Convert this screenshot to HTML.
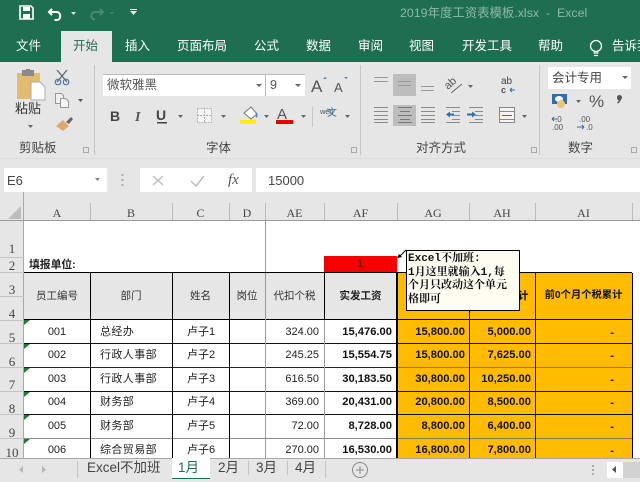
<!DOCTYPE html>
<html><head><meta charset="utf-8"><style>
html,body{margin:0;padding:0;background:#e6e6e6}
#r{position:relative;width:640px;height:482px;overflow:hidden;background:#e6e6e6;font-family:"Liberation Sans","Noto Sans CJK SC",sans-serif;color:#333}
.t,.b,.c{position:absolute;white-space:nowrap}
.t{line-height:1}
.b{display:block}
.tab{color:#fff;font-size:12.5px;top:39px;line-height:15px}
.gl{font-size:12.5px;color:#444;top:141px;line-height:15px}
.ch{position:absolute;top:192px;height:28px;text-align:center;font:12px/42px "Liberation Serif","Noto Serif CJK SC",serif;color:#444}
.rh{position:absolute;left:0;width:24px;text-align:center;font:13px "Liberation Serif",serif;color:#444}
.hc{font-size:10.5px;color:#333;line-height:16px;text-align:center;top:288px;position:absolute}
.num{position:absolute;text-align:right;font-size:11px;line-height:16px;color:#222}
.bd{font-weight:bold;color:#111;font-size:11.2px}
.nm{letter-spacing:.4px}
.sv{position:absolute;left:0;top:0}
</style></head><body><div id="r">

<!-- title bar -->
<div class="b" style="left:0;top:0;width:640px;height:62px;background:#1e6e51"></div>
<div class="b" style="left:61px;top:31px;width:51px;height:31px;background:#e6e6e6"></div>
<svg class="sv" width="640" height="62">
<path d="M20 6h11l2 2v11H20z" fill="none" stroke="#fff" stroke-width="1.6"/>
<rect x="23" y="7" width="7" height="4" fill="#fff"/><rect x="23" y="14" width="7" height="5" fill="#fff"/>
<path d="M52 9l-3 3 3 3M49.500 12h7c5 0 5 8 0 8h-2" fill="none" stroke="#fff" stroke-width="2"/>
<path d="M71 12h5l-2.500 3z" fill="#d5e3dc"/>
<path d="M100 9l3 3-3 3M102 12h-7c-5 0-5 8 0 7" fill="none" stroke="#4c8a70" stroke-width="2"/>
<path d="M110 12h4l-2 2z" fill="#4c8a70"/>
<path d="M130 9h7v1h-7zM130 11h7l-3.500 4z" fill="#e6efea"/>
<circle cx="596" cy="46" r="5.500" fill="none" stroke="#fff" stroke-width="1.300"/><path d="M593.500 53h5M594 55.500h4" stroke="#fff" stroke-width="1.300"/>
</svg>
<div class="t" style="left:400px;top:5px;font-size:12.400px;line-height:16px;color:#8fb9a6">2019年度工资表模板.xlsx &nbsp;-&nbsp; Excel</div>
<div class="t tab" style="left:16px">文件</div>
<div class="t tab" style="left:73px;color:#1e6e51">开始</div>
<div class="t tab" style="left:125px">插入</div>
<div class="t tab" style="left:177px">页面布局</div>
<div class="t tab" style="left:254px">公式</div>
<div class="t tab" style="left:306px">数据</div>
<div class="t tab" style="left:358px">审阅</div>
<div class="t tab" style="left:409px">视图</div>
<div class="t tab" style="left:462px">开发工具</div>
<div class="t tab" style="left:538px">帮助</div>
<div class="t tab" style="left:612px">告诉我</div>

<!-- ribbon separators -->
<div class="b" style="left:94px;top:65px;width:1px;height:90px;background:#c6c6c6"></div>
<div class="b" style="left:360px;top:65px;width:1px;height:90px;background:#c6c6c6"></div>
<div class="b" style="left:539px;top:65px;width:1px;height:90px;background:#c6c6c6"></div>

<svg class="sv" width="640" height="160">
<!-- clipboard -->
<rect x="17" y="73" width="23" height="26" fill="#e2bc6e"/>
<rect x="22" y="70" width="12" height="6" fill="#8a8a8a"/><rect x="26" y="69" width="4" height="3" fill="#8a8a8a"/>
<path d="M31 82h9l5 5v13H31z" fill="#fff" stroke="#aaa"/>
<path d="M57 70l10 12M67 70L57 82" stroke="#666" stroke-width="1.300"/>
<circle cx="58" cy="82" r="2.800" fill="none" stroke="#4a7aa8" stroke-width="1.200"/><circle cx="66" cy="82" r="2.800" fill="none" stroke="#4a7aa8" stroke-width="1.200"/>
<path d="M55.500 93.500h6l2 2v8h-8z" fill="#f0f0f0" stroke="#999"/>
<path d="M60.500 98.500h5l3 3v6h-8z" fill="#f4f4f4" stroke="#999"/>
<path d="M78 99h5l-2.500 3z" fill="#555"/>
<path d="M56 126l7-6 6 6-6 5z" fill="#e0a96d"/><path d="M66 122l5-5 2 2-4 5z" fill="#666"/>
<path d="M28 125h5l-2.500 3z" fill="#666"/>
<rect x="83.500" y="147.500" width="5" height="5" fill="none" stroke="#aaa"/>

<!-- font controls -->
<rect x="103" y="74" width="202" height="22" fill="#fff"/><rect x="103" y="74" width="202" height="1" fill="#bbb"/>
<rect x="265" y="75" width="1" height="21" fill="#bbb"/>
<path d="M256 84h6l-3 3zM295 84h6l-3 3z" fill="#666"/>
<text x="311" y="92" font-size="17" font-family="Liberation Sans" fill="#555">A</text><path d="M323 79l2-2 2 2z" fill="#4a86b8"/>
<text x="334" y="92" font-size="13" font-family="Liberation Sans" fill="#555">A</text><path d="M344 77l2 2 2-2z" fill="#4a86b8"/>
<text x="110" y="121" font-size="14" font-weight="bold" font-family="Liberation Sans" fill="#444">B</text>
<text x="135" y="121" font-size="14" font-weight="bold" font-style="italic" font-family="Liberation Serif" fill="#555">I</text>
<text x="156" y="120" font-size="14" font-weight="bold" font-family="Liberation Sans" fill="#444">U</text>
<rect x="157" y="122" width="10" height="1.500" fill="#444"/>
<path d="M178 115h5l-2.500 3zM221 115h5l-2.500 3zM264 115h5l-2.500 3zM301 115h5l-2.500 3z" fill="#666"/>
<rect x="197.500" y="108.500" width="14" height="14" fill="#f4f4f4" stroke="#b5b5b5" stroke-dasharray="2 1"/><path d="M204.500 108v15M197 115.500h15" stroke="#aaa" stroke-dasharray="2 1"/>
<path d="M244 113l7-6 6 7-6 5z" fill="#fff" stroke="#777"/><path d="M256 113q2 3 0 4" stroke="#4a86b8" stroke-width="1.500" fill="none"/>
<rect x="240" y="120" width="16" height="4" fill="#ffef00"/>
<text x="277" y="119" font-size="15" font-family="Liberation Sans" fill="#555">A</text>
<rect x="276" y="120" width="17" height="4" fill="#e60000"/>
<rect x="312" y="107" width="1" height="20" fill="#c6c6c6"/>
<text x="320" y="114" font-size="7.500" font-family="Liberation Sans" fill="#555" style="letter-spacing:-.2px">wén</text>
<path d="M345 115h5l-2.500 3z" fill="#666"/>
<rect x="351.500" y="147.500" width="5" height="5" fill="none" stroke="#aaa"/>
<rect x="531.500" y="147.500" width="5" height="5" fill="none" stroke="#aaa"/>
<rect x="631.500" y="147.500" width="5" height="5" fill="none" stroke="#aaa"/>

<!-- alignment -->
<rect x="393" y="74" width="23" height="22" fill="#bdbdbd"/>
<rect x="393" y="105" width="23" height="21" fill="#bdbdbd"/>
<path d="M374 77.500h14M374 81.500h14M398 81.500h13M398 85.500h13M421 86.500h13M421 90.500h13" stroke="#999"/>
<path d="M374 107.500h14M374 111.500h14M374 115.500h14M374 119.500h14M374 122.500h14" stroke="#8a8a8a"/>
<path d="M398 107.500h14M400 111.500h10M398 115.500h14M400 119.500h10M398 122.500h14" stroke="#777"/>
<path d="M421 107.500h14M421 111.500h14M421 115.500h14M421 119.500h14M421 122.500h14" stroke="#8a8a8a"/>
<path d="M446 107.500h14M452 111.500h8M452 115.500h8M452 119.500h8M446 122.500h14" stroke="#8a8a8a"/>
<path d="M446 114.500l4-3v6z" fill="#2f6fa8"/><path d="M450 114.500h4" stroke="#2f6fa8" stroke-width="2"/>
<path d="M469 107.500h14M475 111.500h8M475 115.500h8M475 119.500h8M469 122.500h14" stroke="#8a8a8a"/>
<path d="M476 114.500l-4-3v6z" fill="#2f6fa8"/><path d="M467 114.500h6" stroke="#2f6fa8" stroke-width="2"/>
<text x="0" y="0" font-size="11" font-family="Liberation Sans" fill="#555" transform="translate(448,90) rotate(-42)">ab</text>
<path d="M451 93l11-9" stroke="#666"/><path d="M468 85h5l-2.500 3zM522 115h5l-2.500 3z" fill="#666"/>
<text x="501" y="84" font-size="10" font-family="Liberation Sans" fill="#444">ab</text>
<text x="501" y="93" font-size="9" font-weight="bold" font-family="Liberation Sans" fill="#555">c</text>
<path d="M510 90h5M510 90l2-2M510 90l2 2" stroke="#2f6fa8"/>
<rect x="499.500" y="107.500" width="15" height="15" fill="#f4f4f4" stroke="#888"/><path d="M499 111.500h16M499 119.500h16" stroke="#888"/>
<path d="M502 115.500h10" stroke="#2f6fa8"/>

<!-- number -->
<rect x="548" y="67" width="83" height="22" fill="#fff"/>
<path d="M622 76h6l-3 3z" fill="#666"/>
<rect x="552" y="94" width="15" height="10" fill="#2f6fa8"/><ellipse cx="559" cy="99" rx="4" ry="3" fill="#fff"/><circle cx="561" cy="104" r="4" fill="#e7c676"/>
<path d="M576 100h5l-2.500 3z" fill="#666"/>
<text x="589" y="107" font-size="17" font-family="Liberation Sans" fill="#555">%</text>
<path d="M617 97.500a2.500 2.500 0 1 1 4 2c-.5 2-2 3.500-3.500 4l-.5-.8c1-.6 1.500-1.500 1.700-2.500-1 0-1.700-1.200-1.700-2.700z" fill="#555"/>
<text x="555" y="122" font-size="8" font-family="Liberation Sans" fill="#555">.0</text>
<text x="552" y="130" font-size="8" font-family="Liberation Sans" fill="#555">.00</text>
<path d="M552 119h5M552 119l2-2M552 119l2 2" stroke="#2f6fa8" fill="none"/>
<text x="579" y="122" font-size="8" font-family="Liberation Sans" fill="#555">.00</text>
<text x="586" y="130" font-size="8" font-family="Liberation Sans" fill="#555">.0</text>
<path d="M577 127h7M584 127l-2-2M584 127l-2 2" stroke="#2f6fa8" fill="none"/>
</svg>
<div class="t" style="left:15px;top:101px;font-size:13px;line-height:16px;color:#333">粘贴</div>
<div class="t gl" style="left:19px">剪贴板</div>
<div class="t gl" style="left:206px">字体</div>
<div class="t gl" style="left:416px">对齐方式</div>
<div class="t gl" style="left:568px">数字</div>
<div class="t" style="left:107px;top:77px;font-size:12.500px;line-height:16px;color:#555">微软雅黑</div>
<div class="t" style="left:270px;top:77px;font-size:12.500px;line-height:16px;color:#555">9</div>
<div class="t" style="left:327px;top:108px;font-size:10px;line-height:12px;color:#2f6fa8">文</div>
<div class="t" style="left:552px;top:71px;font-size:12.500px;line-height:15px;color:#444">会计专用</div>

<!-- formula bar -->
<div class="b" style="left:0;top:158px;width:640px;height:1px;background:#dcdcdc"></div>
<div class="b" style="left:4px;top:168px;width:103px;height:24px;background:#fff"></div>
<div class="b" style="left:140px;top:168px;width:112px;height:24px;background:#fff"></div>
<div class="b" style="left:256px;top:168px;width:384px;height:24px;background:#fff"></div>
<div class="t" style="left:7px;top:173px;font-size:13px;line-height:15px;color:#444">E6</div>
<div class="t" style="left:268px;top:173px;font-size:13px;line-height:15px;color:#444">15000</div>
<div class="t" style="left:228px;top:171px;font:italic 15px/18px 'Liberation Serif',serif;color:#555"><i>fx</i></div>
<svg class="sv" width="640" height="200">
<path d="M95 178h5l-2.500 3z" fill="#888"/>
<path d="M122.500 174v2M122.500 179v2M122.500 184v2" stroke="#aaa" stroke-width="2"/>
<path d="M153 176l10 9M163 176l-10 9" stroke="#bdbdbd" stroke-width="1.500"/>
<path d="M191 181l5 5 8-10" fill="none" stroke="#bdbdbd" stroke-width="1.500"/>
</svg>

<!-- sheet -->
<div class="b" style="left:0;top:192px;width:640px;height:28px;background:#e6e6e6"></div>
<div class="b" style="left:24px;top:220px;width:616px;height:238px;background:#fff"></div>
<div class="b" style="left:0;top:220px;width:24px;height:238px;background:#e6e6e6"></div>
<div class="b" style="left:0;top:220px;width:640px;height:1px;background:#9a9a9a"></div>
<div class="b" style="left:23px;top:192px;width:1px;height:266px;background:#a8a8a8"></div>
<svg class="sv" width="40" height="222"><path d="M8 219l13-13v13z" fill="#bdbdbd"/></svg>
<div class="ch" style="left:24px;width:66px">A</div>
<div class="ch" style="left:90px;width:82px">B</div>
<div class="ch" style="left:172px;width:57px">C</div>
<div class="ch" style="left:229px;width:36px">D</div>
<div class="ch" style="left:265px;width:59px">AE</div>
<div class="ch" style="left:324px;width:73px">AF</div>
<div class="ch" style="left:397px;width:72px">AG</div>
<div class="ch" style="left:469px;width:66px">AH</div>
<div class="ch" style="left:535px;width:97px">AI</div>
<svg class="sv" width="640" height="222"><path d="M90.500 203v17M172.500 203v17M229.500 203v17M265.500 203v17M324.500 203v17M397.500 203v17M469.500 203v17M535.500 203v17M632.500 203v17" stroke="#bbb"/></svg>
<div class="rh" style="top:241px">1</div>
<div class="rh" style="top:258px">2</div>
<div class="rh" style="top:282px">3</div>
<div class="rh" style="top:306px">4</div>
<div class="rh" style="top:330px">5</div>
<div class="rh" style="top:354px">6</div>
<div class="rh" style="top:377px">7</div>
<div class="rh" style="top:401px">8</div>
<div class="rh" style="top:425px">9</div>
<div class="rh" style="top:445px">10</div>
<svg class="sv" width="24" height="458"><path d="M0 257.500h24M0 272.500h24M0 296.500h24M0 320.500h24M0 343.500h24M0 367.500h24M0 391.500h24M0 414.500h24M0 438.500h24" stroke="#c4c4c4"/></svg>

<!-- fills -->
<div class="b" style="left:24px;top:273px;width:373px;height:47px;background:#e6e6e6"></div>
<div class="b" style="left:397px;top:273px;width:235px;height:185px;background:#ffbb00"></div>
<div class="b" style="left:324px;top:256px;width:73px;height:16px;background:#f70000"></div>
<div class="t" style="left:357px;top:258px;font-size:11px;line-height:13px;font-weight:bold;color:#7a1010">1</div>

<svg class="sv" width="640" height="458" shape-rendering="crispEdges">
<path d="M265.500 220v238" stroke="#9a9a9a"/>
<path d="M24 272.500h608" stroke="#000"/>
<path d="M24 319.500h608" stroke="#000"/>
<path d="M24 343.500h608M24 391.500h608M24 414.500h608" stroke="#111"/>
<path d="M397 367.500h235M397 438.500h235" stroke="#8a7a50"/>
<path d="M24 438.500h373" stroke="#888"/>
<path d="M24 367.500h373" stroke="#222"/>
<path d="M90.500 273v185M172.500 273v185M229.500 273v185M324.500 273v47M396.500 273v185M397.500 273v185M469.500 273v185M535.500 273v185M632.500 273v185" stroke="#000"/>
<path d="M265.500 273v185M324.500 320v138" stroke="#9a9a9a"/>
</svg>
<svg class="sv" width="40" height="458"><path d="M24 320h6l-6 5zM24 344h6l-6 5zM24 368h6l-6 5zM24 392h6l-6 5zM24 415h6l-6 5zM24 439h6l-6 5z" fill="#1e7a3c"/></svg>

<div class="t" style="left:29px;top:258px;font-size:10.800px;line-height:14px;font-weight:bold;color:#222">填报单位:</div>
<div class="hc" style="left:24px;width:66px">员工编号</div>
<div class="hc" style="left:90px;width:82px">部门</div>
<div class="hc" style="left:172px;width:57px">姓名</div>
<div class="hc" style="left:229px;width:36px">岗位</div>
<div class="hc" style="left:265px;width:59px">代扣个税</div>
<div class="hc" style="left:324px;width:73px;font-weight:bold;color:#222">实发工资</div>
<div class="hc" style="left:535px;width:97px;font-weight:bold;font-size:10.300px;color:#111">前0个月个税累计</div>
<div class="t" style="left:518px;top:288px;font-size:10.500px;line-height:16px;font-weight:bold;color:#111">计</div>

<!-- rows -->
<div class="num" style="left:24px;width:66px;text-align:center;top:324px">001</div>
<div class="num" style="left:24px;width:66px;text-align:center;top:347px">002</div>
<div class="num" style="left:24px;width:66px;text-align:center;top:371px">003</div>
<div class="num" style="left:24px;width:66px;text-align:center;top:394px">004</div>
<div class="num" style="left:24px;width:66px;text-align:center;top:418px">005</div>
<div class="num" style="left:24px;width:66px;text-align:center;top:442px">006</div>
<div class="num nm" style="left:100px;text-align:left;top:324px">总经办</div>
<div class="num nm" style="left:100px;text-align:left;top:347px">行政人事部</div>
<div class="num nm" style="left:100px;text-align:left;top:371px">行政人事部</div>
<div class="num nm" style="left:100px;text-align:left;top:394px">财务部</div>
<div class="num nm" style="left:100px;text-align:left;top:418px">财务部</div>
<div class="num nm" style="left:100px;text-align:left;top:442px">综合贸易部</div>
<div class="num" style="left:187px;text-align:left;top:324px">卢子1</div>
<div class="num" style="left:187px;text-align:left;top:347px">卢子2</div>
<div class="num" style="left:187px;text-align:left;top:371px">卢子3</div>
<div class="num" style="left:187px;text-align:left;top:394px">卢子4</div>
<div class="num" style="left:187px;text-align:left;top:418px">卢子5</div>
<div class="num" style="left:187px;text-align:left;top:442px">卢子6</div>

<div class="num" style="left:265px;width:54px;top:324px">324.00</div>
<div class="num" style="left:265px;width:54px;top:347px">245.25</div>
<div class="num" style="left:265px;width:54px;top:371px">616.50</div>
<div class="num" style="left:265px;width:54px;top:394px">369.00</div>
<div class="num" style="left:265px;width:54px;top:418px">72.00</div>
<div class="num" style="left:265px;width:54px;top:442px">270.00</div>

<div class="num bd" style="left:324px;width:68px;top:324px">15,476.00</div>
<div class="num bd" style="left:324px;width:68px;top:347px">15,554.75</div>
<div class="num bd" style="left:324px;width:68px;top:371px">30,183.50</div>
<div class="num bd" style="left:324px;width:68px;top:394px">20,431.00</div>
<div class="num bd" style="left:324px;width:68px;top:418px">8,728.00</div>
<div class="num bd" style="left:324px;width:68px;top:442px">16,530.00</div>

<div class="num bd" style="left:397px;width:68px;top:324px">15,800.00</div>
<div class="num bd" style="left:397px;width:68px;top:347px">15,800.00</div>
<div class="num bd" style="left:397px;width:68px;top:371px">30,800.00</div>
<div class="num bd" style="left:397px;width:68px;top:394px">20,800.00</div>
<div class="num bd" style="left:397px;width:68px;top:418px">8,800.00</div>
<div class="num bd" style="left:397px;width:68px;top:442px">16,800.00</div>

<div class="num bd" style="left:469px;width:62px;top:324px">5,000.00</div>
<div class="num bd" style="left:469px;width:62px;top:347px">7,625.00</div>
<div class="num bd" style="left:469px;width:62px;top:371px">10,250.00</div>
<div class="num bd" style="left:469px;width:62px;top:394px">8,500.00</div>
<div class="num bd" style="left:469px;width:62px;top:418px">6,400.00</div>
<div class="num bd" style="left:469px;width:62px;top:442px">7,800.00</div>

<div class="num bd" style="left:535px;width:79px;top:325px">-</div>
<div class="num bd" style="left:535px;width:79px;top:348px">-</div>
<div class="num bd" style="left:535px;width:79px;top:372px">-</div>
<div class="num bd" style="left:535px;width:79px;top:395px">-</div>
<div class="num bd" style="left:535px;width:79px;top:419px">-</div>
<div class="num bd" style="left:535px;width:79px;top:443px">-</div>

<!-- comment -->
<div class="b" style="left:406px;top:250px;width:112px;height:59px;background:#fffdf2;border:1px solid #000"></div>
<svg class="sv" width="640" height="300"><path d="M406 250l-7 7" stroke="#000"/><path d="M397 258l5-1-3-3z" fill="#000"/></svg>
<div class="t" style="left:408px;top:253px;font:bold 11px/13.700px 'Liberation Mono','Noto Serif CJK SC',serif;color:#111;white-space:pre">Excel不加班:
1月这里就输入1,每
个月只改动这个单元
格即可</div>

<!-- sheet tabs -->
<div class="b" style="left:0;top:458px;width:640px;height:24px;background:#e6e6e6"></div>
<div class="b" style="left:0;top:458px;width:640px;height:1px;background:#a8a8a8"></div>
<div class="b" style="left:172px;top:458px;width:38px;height:20px;background:#fff;border-bottom:1px solid #1e6e51"></div>
<div class="t" style="left:87px;top:460px;font-size:13.500px;line-height:16px;color:#444">Excel不加班</div>
<div class="t" style="left:178px;top:460px;font-size:13.500px;line-height:16px;color:#1e6e51">1月</div>
<div class="t" style="left:218px;top:460px;font-size:13.500px;line-height:16px;color:#444">2月</div>
<div class="t" style="left:256px;top:460px;font-size:13.500px;line-height:16px;color:#444">3月</div>
<div class="t" style="left:295px;top:460px;font-size:13.500px;line-height:16px;color:#444">4月</div>
<svg class="sv" width="640" height="482">
<path d="M23 466l-4 3.500 4 3.500zM42 466l4 3.500-4 3.500z" fill="#b5b5b5"/>
<path d="M77.500 461v17M248.500 461v14M287.500 461v14M325.500 461v17" stroke="#c4c4c4"/>
<circle cx="360" cy="470" r="7.500" fill="none" stroke="#888" stroke-width="1"/>
<path d="M356 470h8M360 466v8" stroke="#888"/>
<path d="M593 465v2M593 469v2M593 473v2" stroke="#aaa" stroke-width="2"/>
<rect x="607" y="462" width="16" height="16" fill="#fff"/>
<rect x="623" y="462" width="17" height="16" fill="#d2d2d2"/>
<path d="M616 466v7l-4-3.500z" fill="#555"/>
</svg>
</div></body></html>
